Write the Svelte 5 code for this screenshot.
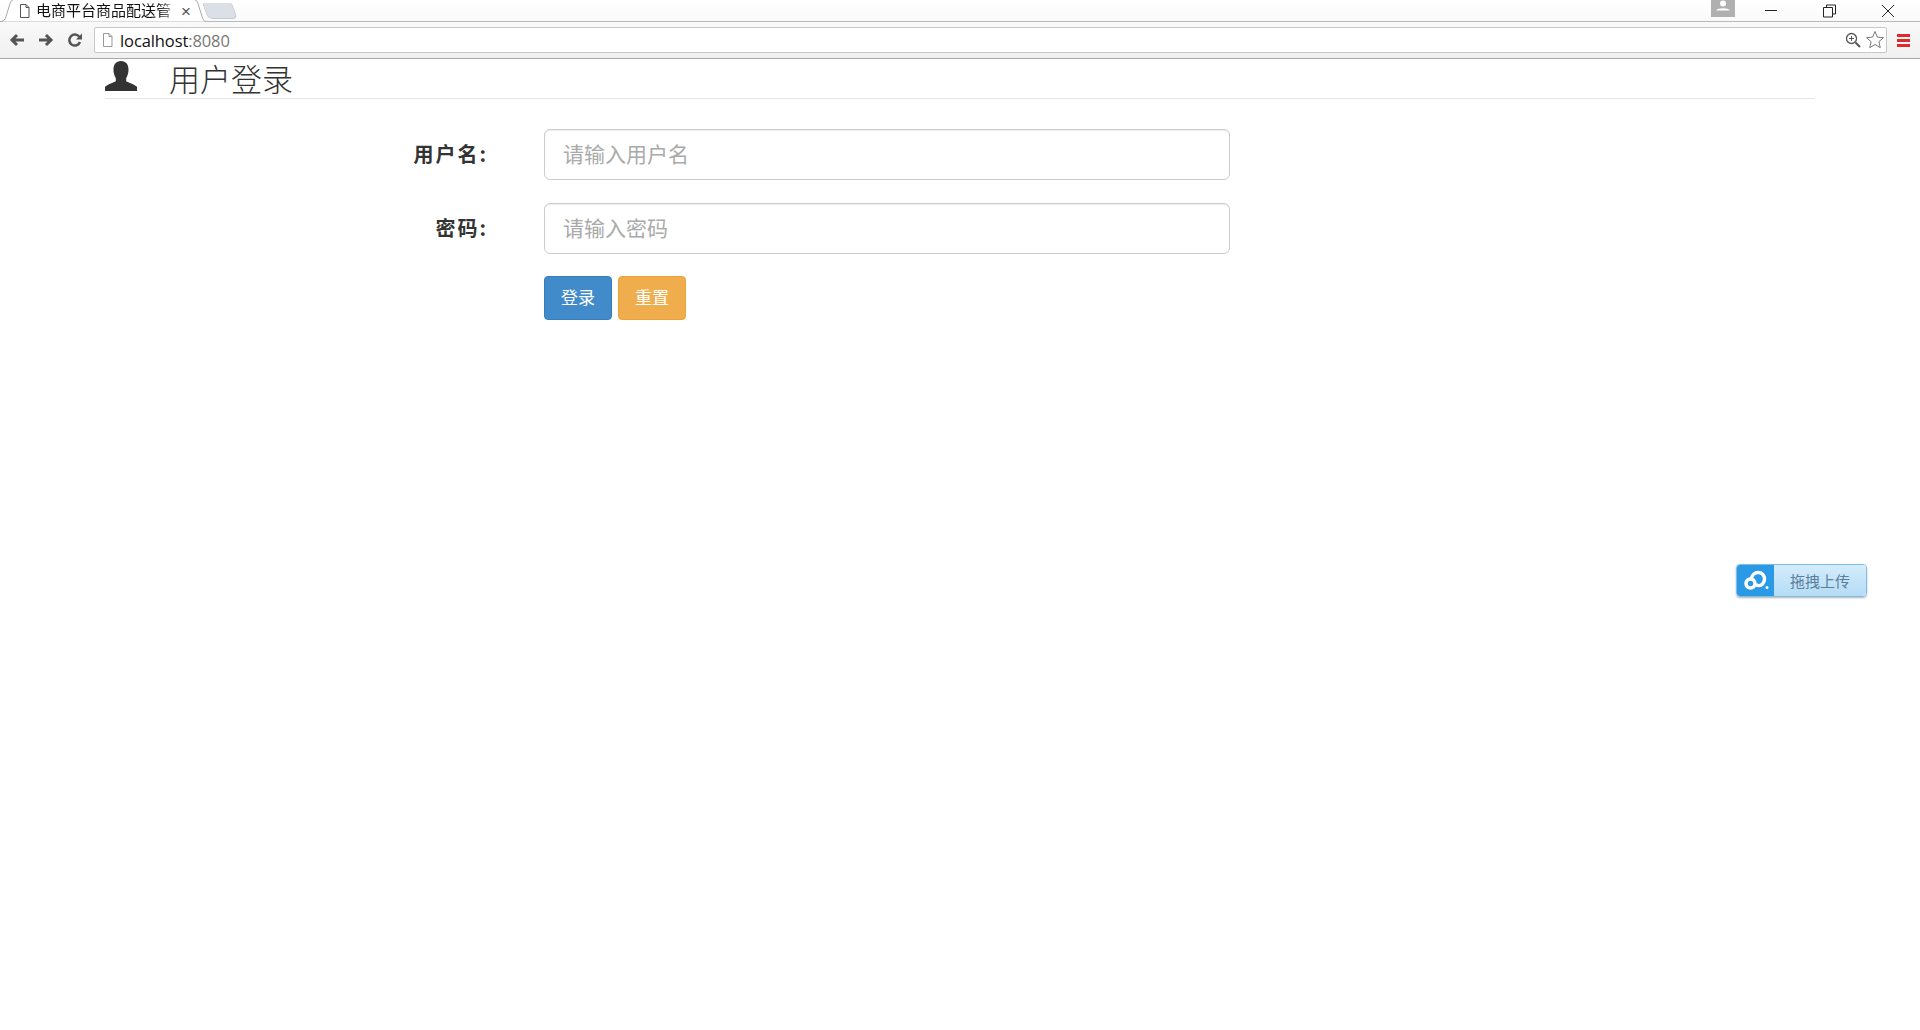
<script>
	const fields = [
		{ label: '用户名:', placeholder: '请输入用户名', type: 'text' },
		{ label: '密码:', placeholder: '请输入密码', type: 'password' }
	];
</script>

<div class="browser">
	<div class="titlebar">
		<div class="tab">
			<svg class="tab-shape" width="206" height="23" viewBox="0 0 206 23">
				<path d="M0 22.500h1c3 0 4-2 5-5l4-13c1-3 2-4 5-4h178c3 0 4 1 5 4l4 13c1 3 2 5 4 5" fill="#fff" stroke="#a9a9a9" />
			</svg>
			<svg class="page-ico" width="11" height="14" viewBox="0 0 11 14">
				<path d="M1.500 .5h5.500l3 3v10h-8.500z M7 .5v3h3" fill="#fff" stroke="#555" />
			</svg>
			<span class="tab-title">电商平台商品配送管</span>
			<span class="tab-close">×</span>
		</div>
		<div class="new-tab"></div>
		<div class="window-ctrls">
			<div class="avatar">
				<svg width="14" height="12" viewBox="0 0 14 12">
					<circle cx="7" cy="3.500" r="3" fill="#fff" />
					<path d="M0 10.500c2-3 12-3 14 0z" fill="#fff" />
				</svg>
			</div>
			<svg class="win-btn" width="60" height="20" viewBox="0 0 60 20">
				<path d="M25 10.500h12" stroke="#222" />
			</svg>
			<svg class="win-btn" width="60" height="20" viewBox="0 0 60 20">
				<path d="M26.500 7.500v-2.500h9v9h-3M23.500 7.500h9v9.500h-9z" fill="none" stroke="#222" />
			</svg>
			<svg class="win-btn" width="60" height="20" viewBox="0 0 60 20">
				<path d="M22 5l12 12M34 5l-12 12" stroke="#222" />
			</svg>
		</div>
	</div>
	<div class="toolbar">
		<svg class="nav" width="18" height="14" viewBox="0 0 18 14">
			<path d="M16 7h-12M9 2l-5 5 5 5" fill="none" stroke="#555" stroke-width="3" />
		</svg>
		<svg class="nav" width="18" height="14" viewBox="0 0 18 14">
			<path d="M2 7h12M9 2l5 5-5 5" fill="none" stroke="#555" stroke-width="3" />
		</svg>
		<svg class="nav" width="16" height="16" viewBox="0 0 16 16">
			<path d="M13 10a5.500 5.500 0 1 1-.6-5" fill="none" stroke="#555" stroke-width="2.500" />
			<path d="M15 1.500v6h-6z" fill="#555" />
		</svg>
		<div class="omnibox">
			<svg width="11" height="14" viewBox="0 0 11 14">
				<path d="M1.500 .5h5.500l3 3v10h-8.500z M7 .5v3h3" fill="#fff" stroke="#999" />
			</svg>
			<span class="url">localhost<span class="port">:8080</span></span>
			<svg class="zoom-ico" width="16" height="16" viewBox="0 0 16 16">
				<circle cx="6.500" cy="6.500" r="5" fill="none" stroke="#555" stroke-width="1.300" />
				<path d="M10.500 10.500l4.500 4.500" stroke="#555" stroke-width="2" />
				<path d="M4 6.500h5M6.500 4v5" stroke="#555" />
			</svg>
			<svg width="18" height="18" viewBox="0 0 18 18">
				<path d="M9 .5l2.400 5.600 6.100.6-4.600 4 1.400 6-5.300-3.200-5.300 3.200 1.400-6-4.600-4 6.100-.6z" fill="#fff" stroke="#777" />
			</svg>
		</div>
		<div class="menu"><i></i><i></i><i></i></div>
	</div>
</div>

<main class="page">
	<h2 class="heading">
		<svg width="32" height="32" viewBox="0 0 34 32">
			<path d="M17 0c5.500 0 8 4 8 9.500 0 4-1.500 6.500-2.500 9v3c2.500 1.500 8.500 3 11.500 6v4.500h-34v-4.500c3-3 9-4.500 11.500-6v-3c-1-2.500-2.500-5-2.500-9 0-5.500 2.500-9.500 8-9.500z" fill="#333" />
		</svg>
		<span>用户登录</span>
	</h2>

	<form class="form">
		{#each fields as f}
			<div class="row">
				<label class="label" for={f.type}>{f.label}</label>
				<input id={f.type} class="input" type={f.type} placeholder={f.placeholder} />
			</div>
		{/each}
		<div class="actions">
			<button type="button" class="btn btn-primary">登录</button>
			<button type="button" class="btn btn-warning">重置</button>
		</div>
	</form>

	<div class="drag-badge">
		<div class="badge-ico">
			<svg width="28" height="22" viewBox="0 0 28 22">
				<circle cx="8.500" cy="13.500" r="4.500" fill="none" stroke="#fff" stroke-width="3.500" />
				<path d="M9 9c1-4 4-6.500 7-6.500 4 0 6.500 3 6.500 6.500 0 2-.5 3.500-2 5-2 2-5 2-6.500 .5" fill="none" stroke="#fff" stroke-width="3.500" />
				<circle cx="25" cy="17.500" r="1.500" fill="#fff" />
			</svg>
		</div>
		<div class="badge-text">拖拽上传</div>
	</div>
</main>

<style>
	:global(body) {
		margin: 0;
		background: #fff;
		font-family: 'Noto Sans CJK SC', sans-serif;
	}

	.browser {
		height: 59px;
		border-bottom: 1px solid #a8a8a8;
		box-sizing: border-box;
		background: linear-gradient(#fff, #f0f0f0);
	}

	.titlebar {
		height: 22px;
		display: flex;
		align-items: flex-start;
		border-bottom: 1px solid #b8b8b8;
		box-sizing: border-box;
		position: relative;
	}

	.tab {
		position: relative;
		width: 206px;
		height: 22px;
		padding-left: 19px;
		box-sizing: border-box;
		display: flex;
		align-items: center;
		gap: 6px;
		font-size: 15px;
		line-height: 20px;
		color: #111;
	}

	.tab-shape {
		position: absolute;
		left: 0;
		top: -1px;
	}

	.page-ico,
	.tab-title,
	.tab-close {
		position: relative;
	}

	.tab-title {
		padding-bottom: 2px;
		white-space: nowrap;
		mask-image: linear-gradient(to right, #000 90%, rgba(0, 0, 0, 0.5));
	}

	.tab-close {
		margin-left: 4px;
		font-size: 17px;
		line-height: 1;
		color: #555;
		font-family: 'Liberation Sans', sans-serif;
	}

	.new-tab {
		width: 28px;
		height: 15px;
		margin: 3px 0 0 -1px;
		background: #dbe0e8;
		border: 1px solid #c4c9d2;
		border-top: 0;
		border-radius: 3px 3px 5px 5px;
		transform: skewX(20deg);
	}

	.window-ctrls {
		margin-left: auto;
		display: flex;
		align-items: flex-start;
	}

	.avatar {
		width: 24px;
		height: 17px;
		background: #b0b0b0;
		display: flex;
		justify-content: center;
		margin-right: 5px;
	}

	.win-btn {
		display: block;
	}

	.toolbar {
		height: 36px;
		display: flex;
		align-items: center;
		padding-left: 8px;
		gap: 11px;
	}

	.nav {
		flex: none;
	}

	.nav:nth-child(3) {
		margin-left: 1px;
	}

	.omnibox {
		width: 1793px;
		height: 26px;
		display: flex;
		align-items: center;
		gap: 7px;
		padding: 0 2px 0 7px;
		box-sizing: border-box;
		background: #fff;
		border: 1px solid #c8c8c8;
		border-radius: 2px;
	}

	.url {
		font-family: 'Open Sans', sans-serif;
		font-size: 16.500px;
		color: #111;
		flex: 1;
		letter-spacing: -0.1px;
	}

	.port {
		color: #777;
	}

	.zoom-ico {
		margin-right: -2px;
	}

	.menu {
		display: flex;
		flex-direction: column;
		gap: 2px;
		margin-left: -1px;
	}

	.menu i {
		display: block;
		width: 13px;
		height: 3px;
		background: #e0282d;
	}

	.page {
		position: relative;
		min-height: 971px;
		padding: 0 105px;
	}

	.heading {
		margin: 0;
		height: 39px;
		display: flex;
		align-items: flex-start;
		gap: 32px;
		border-bottom: 1px solid #e6e6e6;
		font-size: 31px;
		font-weight: 300;
		color: #333;
	}

	.heading svg {
		margin-top: 1px;
	}

	.heading span {
		line-height: 38px;
	}

	.form {
		margin-top: 30px;
		display: flex;
		flex-direction: column;
		gap: 23px;
	}

	.row {
		display: flex;
		align-items: center;
	}

	.label {
		width: 383px;
		text-align: right;
		font-size: 20px;
		font-weight: 700;
		letter-spacing: 2px;
		line-height: 26px;
		padding-bottom: 1px;
		color: #333;
		flex: none;
	}

	.input {
		width: 686px;
		height: 51px;
		margin-left: 56px;
		padding: 0 18px 4px;
		box-sizing: border-box;
		border: 1px solid #ccc;
		border-radius: 6px;
		box-shadow: inset 0 1px 1px rgba(0, 0, 0, 0.075);
		font-family: inherit;
		font-size: 21px;
		color: #555;
		background: #fff;
	}

	.input::placeholder {
		color: #aaa;
		opacity: 1;
	}

	.actions {
		display: flex;
		gap: 6px;
		margin-left: 439px;
		margin-top: -1px;
	}

	.btn {
		width: 68px;
		height: 44px;
		padding: 0 0 3px;
		border: 1px solid;
		border-radius: 4px;
		color: #fff;
		font-family: inherit;
		font-size: 17px;
	}

	.btn-primary {
		background: #428bca;
		border-color: #357ebd;
	}

	.btn-warning {
		background: #f0ad4e;
		border-color: #eea236;
	}

	.drag-badge {
		position: absolute;
		left: 1736px;
		top: 505px;
		width: 131px;
		height: 33px;
		display: flex;
		border-radius: 4px;
		overflow: hidden;
		border: 1px solid #7fbce8;
		box-sizing: border-box;
		box-shadow: 0 1px 2px rgba(0, 0, 0, 0.3);
	}

	.badge-ico {
		width: 37px;
		background: #2b9ae6;
		display: flex;
		align-items: center;
		justify-content: center;
	}

	.badge-text {
		flex: 1;
		background: linear-gradient(#d4ecfb, #b4dcf6);
		color: #5c7f99;
		font-size: 15px;
		line-height: 32px;
		text-align: center;
	}
</style>
